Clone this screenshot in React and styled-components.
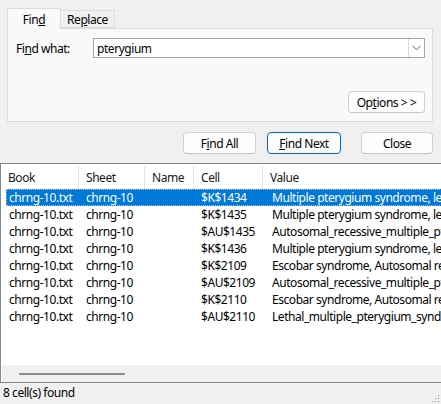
import styled, { createGlobalStyle } from "styled-components";

const GlobalStyle = createGlobalStyle`
  html, body {
    margin: 0;
    padding: 0;
    background: #f0f0f0;
  }
  body {
    font-family: "Segoe UI", "Noto Sans", "Open Sans", sans-serif;
    font-size: 12px;
    letter-spacing: -0.45px;
    color: #000;
  }
`;

const results = [
  { book: "chrng-10.txt", sheet: "chrng-10", name: "", cell: "$K$1434", value: "Multiple pterygium syndrome, lethal type" },
  { book: "chrng-10.txt", sheet: "chrng-10", name: "", cell: "$K$1435", value: "Multiple pterygium syndrome, lethal type" },
  { book: "chrng-10.txt", sheet: "chrng-10", name: "", cell: "$AU$1435", value: "Autosomal_recessive_multiple_pterygium" },
  { book: "chrng-10.txt", sheet: "chrng-10", name: "", cell: "$K$1436", value: "Multiple pterygium syndrome, lethal type" },
  { book: "chrng-10.txt", sheet: "chrng-10", name: "", cell: "$K$2109", value: "Escobar syndrome, Autosomal recessive" },
  { book: "chrng-10.txt", sheet: "chrng-10", name: "", cell: "$AU$2109", value: "Autosomal_recessive_multiple_pterygium" },
  { book: "chrng-10.txt", sheet: "chrng-10", name: "", cell: "$K$2110", value: "Escobar syndrome, Autosomal recessive" },
  { book: "chrng-10.txt", sheet: "chrng-10", name: "", cell: "$AU$2110", value: "Lethal_multiple_pterygium_syndrome" },
];

const App = () => {
  return (
    <>
      <GlobalStyle />
      <Dialog>
        {/* TABS */}
        <TopArea>
          <TabStrip>
            <Tab $active>
              Fin<u>d</u>
            </Tab>
            <Tab>
              Re<u>p</u>lace
            </Tab>
          </TabStrip>
          <TabPanel>
            <FieldRow>
              <Label>
                Fi<u>n</u>d what:
              </Label>
              <Combo>
                <ComboText>pterygium</ComboText>
                <DropButton>
                  <svg width="9" height="6" viewBox="0 0 9 6">
                    <path d="M0.5 0.8 L4.5 4.8 L8.5 0.8" fill="none" stroke="#5a5a5a" strokeWidth="1" />
                  </svg>
                </DropButton>
              </Combo>
            </FieldRow>
            <Button $width="77px" $align="flex-end">
              Op<u>t</u>ions &gt; &gt;
            </Button>
          </TabPanel>
        </TopArea>

        {/* ACTION BUTTONS */}
        <ButtonRow>
          <Button $width="73px">
            F<u>i</u>nd All
          </Button>
          <Button $width="74px" $primary>
            <u>F</u>ind Next
          </Button>
          <Button $width="72px" $gap="9px">
            Close
          </Button>
        </ButtonRow>

        {/* RESULTS */}
        <ResultList>
          <HeaderRow>
            <HeaderCell>Book</HeaderCell>
            <HeaderCell>Sheet</HeaderCell>
            <HeaderCell>Name</HeaderCell>
            <HeaderCell>Cell</HeaderCell>
            <HeaderCell $last>Value</HeaderCell>
          </HeaderRow>
          <Rows>
            {results.map((r, i) => (
              <Row key={i} $selected={i === 0}>
                <Cell $first>{r.book}</Cell>
                <Cell>{r.sheet}</Cell>
                <Cell>{r.name}</Cell>
                <Cell>{r.cell}</Cell>
                <Cell $value>{r.value}</Cell>
              </Row>
            ))}
          </Rows>
          <HScroll>
            <Thumb />
          </HScroll>
        </ResultList>

        <StatusBar>
          <span>8 cell(s) found</span>
          <svg width="10" height="10" viewBox="0 0 10 10">
            <g fill="#a8a8a8">
              <rect x="8" y="2" width="1.2" height="1.2" />
              <rect x="5" y="5" width="1.2" height="1.2" />
              <rect x="8" y="5" width="1.2" height="1.2" />
              <rect x="2" y="8" width="1.2" height="1.2" />
              <rect x="5" y="8" width="1.2" height="1.2" />
              <rect x="8" y="8" width="1.2" height="1.2" />
            </g>
          </svg>
        </StatusBar>
      </Dialog>
    </>
  );
};

const Dialog = styled.div`
  width: 441px;
  height: 404px;
  display: flex;
  flex-direction: column;
  background: #f0f0f0;
  overflow: hidden;
`;

const TopArea = styled.div`
  padding: 8px 8px 0 7px;
  display: flex;
  flex-direction: column;
`;

const TabStrip = styled.div`
  display: flex;
  align-items: flex-end;
  height: 20px;
`;

const Tab = styled.div`
  box-sizing: border-box;
  width: 54px;
  height: ${(props) => (props.$active ? "21px" : "18px")};
  display: flex;
  align-items: center;
  justify-content: center;
  padding-top: ${(props) => (props.$active ? "0" : "1px")};
  background: ${(props) => (props.$active ? "#f9f9f9" : "#f0f0f0")};
  border: 1px solid #dcdcdc;
  border-bottom: ${(props) => (props.$active ? "none" : "1px solid #dcdcdc")};
  border-left: ${(props) => (props.$active ? "1px solid #dcdcdc" : "none")};
  margin-bottom: ${(props) => (props.$active ? "-1px" : "0")};
  position: relative;
  z-index: ${(props) => (props.$active ? 1 : 0)};
`;

const TabPanel = styled.div`
  box-sizing: border-box;
  height: 94px;
  background: #f9f9f9;
  border: 1px solid #dcdcdc;
  padding: 9px 7px 8px 8px;
  display: flex;
  flex-direction: column;
  justify-content: space-between;
`;

const FieldRow = styled.div`
  display: flex;
  align-items: center;
`;

const Label = styled.div`
  width: 77px;
  flex-shrink: 0;
`;

const Combo = styled.div`
  box-sizing: border-box;
  flex: 1;
  height: 20px;
  display: flex;
  align-items: center;
  background: #fff;
  border: 1px solid #a5a5a5;
`;

const ComboText = styled.div`
  flex: 1;
  padding-left: 3px;
`;

const DropButton = styled.div`
  box-sizing: border-box;
  width: 16px;
  height: 18px;
  display: flex;
  align-items: center;
  justify-content: center;
  border-left: 1px solid #d6d6d6;
  background: #fff;
`;

const Button = styled.div`
  box-sizing: border-box;
  width: ${(props) => props.$width};
  height: 22px;
  align-self: ${(props) => props.$align || "auto"};
  margin-left: ${(props) => props.$gap || "0"};
  display: flex;
  align-items: center;
  justify-content: center;
  background: #fdfdfd;
  border: 1px solid ${(props) => (props.$primary ? "#0067c0" : "#d0d0d0")};
  border-bottom-color: ${(props) => (props.$primary ? "#0067c0" : "#c4c4c4")};
  border-radius: 4px;
`;

const ButtonRow = styled.div`
  display: flex;
  justify-content: flex-end;
  gap: 11px;
  padding: 0 8px 0 0;
  margin-top: 10px;
`;

const ResultList = styled.div`
  box-sizing: border-box;
  flex: 1;
  margin-top: 9px;
  margin-right: -4px;
  display: flex;
  flex-direction: column;
  background: #fff;
  border: 1px solid #828790;
`;

const columns = "78px 66px 49px 69px 1fr";

const HeaderRow = styled.div`
  display: grid;
  grid-template-columns: ${columns};
  height: 25px;
`;

const HeaderCell = styled.div`
  display: flex;
  align-items: center;
  padding-left: 7px;
  border-right: ${(props) => (props.$last ? "none" : "1px solid #e5e5e5")};
  margin: 2px 0 0;
  color: #1a1a1a;
`;

const Rows = styled.div`
  flex: 1;
  display: flex;
  flex-direction: column;
`;

const Row = styled.div`
  box-sizing: border-box;
  display: grid;
  grid-template-columns: 73px 66px 49px 69px 1fr;
  height: 17px;
  margin-left: 5px;
  align-items: center;
  background: ${(props) => (props.$selected ? "#0078d7" : "transparent")};
  color: ${(props) => (props.$selected ? "#fff" : "#000")};
  outline: ${(props) => (props.$selected ? "1px dotted #9bc7f0" : "none")};
  outline-offset: -1px;
`;

const Cell = styled.div`
  padding-left: ${(props) => (props.$first ? "3px" : props.$value ? "9px" : "7px")};
  white-space: nowrap;
  overflow: hidden;
`;

const HScroll = styled.div`
  height: 17px;
  margin: 0 1px 0 1px;
  background: #f0f0f0;
  display: flex;
  align-items: center;
  padding-left: 17px;
`;

const Thumb = styled.div`
  width: 106px;
  height: 2px;
  border-radius: 1px;
  background: #8a8a8a;
`;

const StatusBar = styled.div`
  box-sizing: border-box;
  height: 21px;
  display: flex;
  justify-content: space-between;
  align-items: center;
  padding: 0 1px 3px 3px;

  & svg {
    align-self: flex-end;
    margin-bottom: -2px;
  }
`;

export default App;
